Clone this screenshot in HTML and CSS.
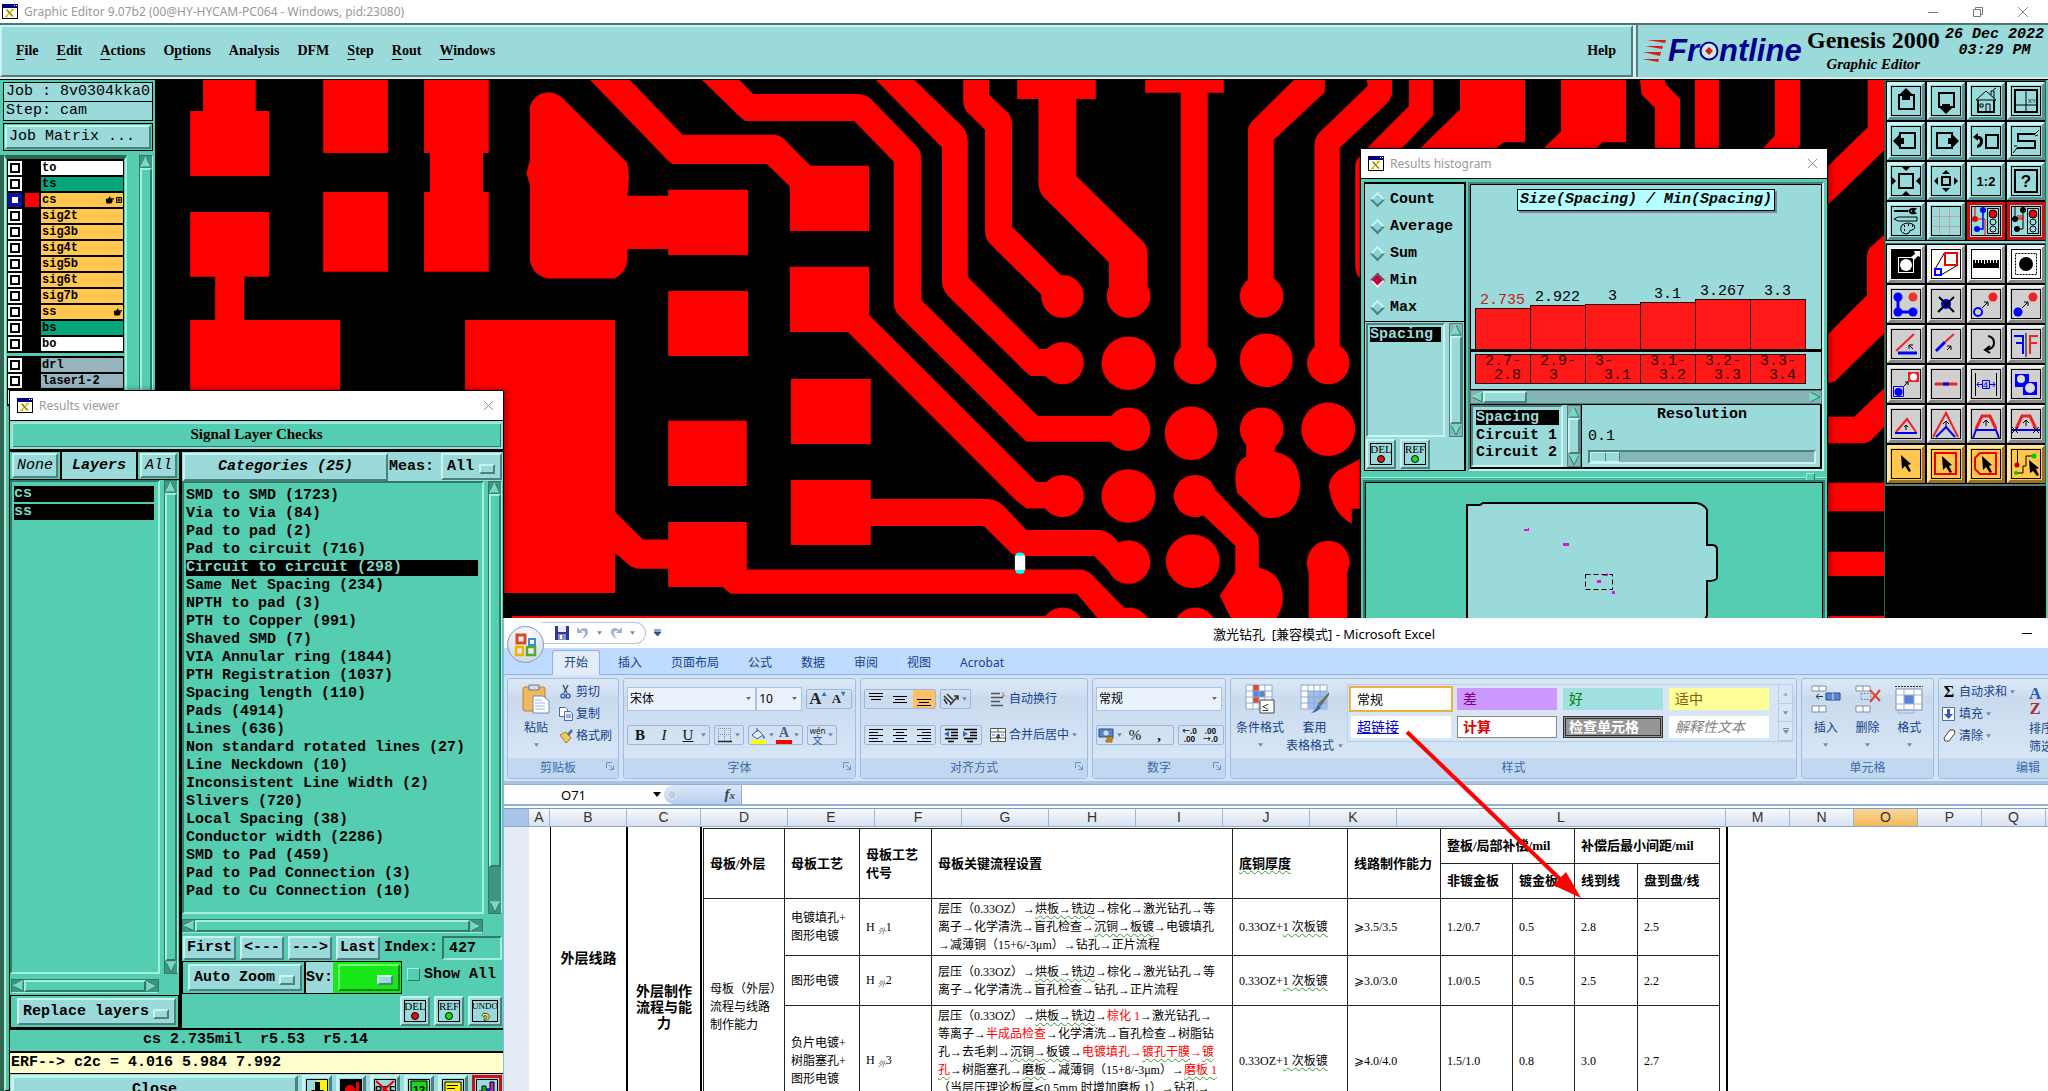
FILE: index.html
```html
<!DOCTYPE html>
<html lang="zh-CN">
<head>
<meta charset="utf-8">
<title>Graphic Editor 9.07b2</title>
<link rel="stylesheet" href="styles.css">
</head>
<body>
<svg class="defs" width="0" height="0" aria-hidden="true">
  <symbol id="xwin" viewBox="0 0 16 15"><rect x=".5" y=".5" width="15" height="14" fill="#fff" stroke="#000"/><rect width="16" height="4" fill="#000080"/><path d="M12 1.500h1M14 1.500h1" stroke="#fff"/><path d="M4.500 5.500l6 7M11 5.500l-7 7M9 5.500h3M3 12.500h3" stroke="#d8c400" stroke-width="1.600"/><path d="M5 6l6 6.500" stroke="#000" stroke-width=".6"/></symbol>
  <symbol id="close" viewBox="0 0 12 12"><path d="M1 1l10 10M11 1L1 11" stroke="#888" fill="none"/></symbol>
  <symbol id="drop" viewBox="0 0 6 4"><path d="M0 0h6L3 4z" fill="#6c8cb8"/></symbol>
  <symbol id="launch" viewBox="0 0 8 8"><path d="M.5 6V.5H6M3 3l4 4M7.500 3.500v4h-4" stroke="#6c93c8" fill="none"/></symbol>
  <symbol id="up" viewBox="0 0 12 12"><path d="M6 1L1 11h10z" fill="#74dcc4" stroke="#2f7a68"/><path d="M6 1L1 11" stroke="#bff5ea"/></symbol>
  <symbol id="down" viewBox="0 0 12 12"><path d="M6 11L1 1h10z" fill="#74dcc4" stroke="#2f7a68"/><path d="M1 1h10" stroke="#bff5ea"/></symbol>
  <symbol id="left" viewBox="0 0 12 12"><path d="M1 6L11 1v10z" fill="#74dcc4" stroke="#2f7a68"/><path d="M1 6l10-5" stroke="#bff5ea"/></symbol>
  <symbol id="right" viewBox="0 0 12 12"><path d="M11 6L1 1v10z" fill="#74dcc4" stroke="#2f7a68"/><path d="M1 11V1" stroke="#bff5ea"/></symbol>
  <symbol id="hand" viewBox="0 0 10 8"><path d="M1 3l3-1 1-2 1 0v2h4v1.500H8v1h1v1H8V7H7v1H2L1 6z" fill="#000"/></symbol>
  <symbol id="frame" viewBox="0 0 30 30"><rect x=".5" y=".5" width="29" height="29" fill="none" stroke="#000"/></symbol>
</svg>
<div class="desktop">

<main class="editor">
  <header class="titlebar">
    <svg class="wicon" width="16" height="15"><use href="#xwin"/></svg>
    <span>Graphic Editor 9.07b2 (00@HY-HYCAM-PC064 - Windows, pid:23080)</span>
    <div class="winctl">
      <svg width="12" height="12" viewBox="0 0 12 12"><path d="M1 6.500h10" stroke="#777"/></svg>
      <svg width="12" height="12" viewBox="0 0 12 12"><path d="M1.500 3.500h7v7h-7zM3.500 3.500v-2h7v7h-2" stroke="#777" fill="none"/></svg>
      <svg width="12" height="12"><use href="#close"/></svg>
    </div>
  </header>

  <div class="menubar">
    <nav class="menu">
      <a href="#"><u>F</u>ile</a><a href="#"><u>E</u>dit</a><a href="#"><u>A</u>ctions</a><a href="#">O<u>p</u>tions</a><a href="#">Analysis</a><a href="#">DFM</a><a href="#"><u>S</u>tep</a><a href="#"><u>R</u>out</a><a href="#"><u>W</u>indows</a>
      <a class="help" href="#">Help</a>
    </nav>
    <div class="brand">
      <div class="logo">
        <svg width="26" height="26" viewBox="0 0 26 26"><path d="M5 2h19l-1 3zM3 8h18l-1 3zM1 14h18l-1 4zM0 21h17l-1 3z" fill="#e01818"/></svg><span>Fr</span><svg width="20" height="22" viewBox="0 0 20 22"><circle cx="10" cy="11" r="8.500" fill="#c8ecec" stroke="#00008b" stroke-width="2"/><path d="M10 7l4 4-4 4-4-4z" fill="#e01818"/></svg><span>ntline</span>
      </div>
      <div class="product"><b>Genesis 2000</b><i>Graphic Editor</i></div>
      <div class="date"><time>26 Dec 2022</time><time>03:29 PM</time></div>
    </div>
  </div>

  <div class="work">
    <aside class="layers">
      <div class="jobbox">Job : 8v0304kka0</div>
      <div class="jobbox">Step: cam</div>
      <div class="matrix"><button>Job Matrix ...</button></div>
      <div class="layerarea">
        <div class="layerlists">
          <ul class="llist">
            <li><input type="checkbox" aria-label="to"><i></i><b>to</b></li>
            <li><input type="checkbox" aria-label="ts"><i></i><b class="mask">ts</b></li>
            <li><input type="checkbox" class="on" aria-label="cs"><i class="red"></i><b class="sig">cs<span><svg width="9" height="8"><use href="#hand"/></svg><svg width="6" height="6" viewBox="0 0 6 6"><path d="M.5.5h5v5h-5zM3 0v6M0 3h6" fill="none" stroke="#000"/></svg></span></b></li>
            <li><input type="checkbox" aria-label="sig2t"><i></i><b class="sig">sig2t</b></li>
            <li><input type="checkbox" aria-label="sig3b"><i></i><b class="sig">sig3b</b></li>
            <li><input type="checkbox" aria-label="sig4t"><i></i><b class="sig">sig4t</b></li>
            <li><input type="checkbox" aria-label="sig5b"><i></i><b class="sig">sig5b</b></li>
            <li><input type="checkbox" aria-label="sig6t"><i></i><b class="sig">sig6t</b></li>
            <li><input type="checkbox" aria-label="sig7b"><i></i><b class="sig">sig7b</b></li>
            <li><input type="checkbox" aria-label="ss"><i></i><b class="sig">ss<span><svg width="9" height="8"><use href="#hand"/></svg></span></b></li>
            <li><input type="checkbox" aria-label="bs"><i></i><b class="mask">bs</b></li>
            <li><input type="checkbox" aria-label="bo"><i></i><b>bo</b></li>
          </ul>
          <ul class="llist">
            <li><input type="checkbox" aria-label="drl"><i></i><b class="drill">drl</b></li>
            <li><input type="checkbox" aria-label="laser1-2"><i></i><b class="drill">laser1-2</b></li>
            <li><input type="checkbox" aria-label="drill"><i></i><b class="drill"></b></li>
          </ul>
        </div>
        <div class="vscroll"><svg width="12" height="12"><use href="#up"/></svg><div class="thumb"></div></div>
      </div>
    </aside>

    <div class="board">
    <svg viewBox="155 80 1729 1011" preserveAspectRatio="xMinYMin slice" fill="#f00">
      <rect x="155" y="80" width="1729" height="1011" fill="#000"/>
      <g transform="scale(.4464 .3333)">
        <path d="M455 240h118v93h30v195H426V333h29zM724 240h145v219H724zM950 240h145v219h-13v117h13v239H950V576h13V459H950zM724 576h145v239H724zM426 636h177v194h-56v130h215v400H426V960h56V830h-56zM1042 960h336v819h-336z"/>
      </g>
      <g transform="translate(500 60) scale(.574 .3571)">
        <path d="M52 130Q60 92 85 90 98 92 108 105L220 285Q228 310 222 380H293V363H432V546H293V529H222V560Q220 595 200 612H82Q56 600 52 560V350L46 318 52 280z"/>
        <path d="M157 56H226L318 209H480Q492 213 500 230L541 296H643V479H505V354L465 291H300L290 277z"/>
        <path d="M352 56H417L441 95H625Q640 98 648 112L725 240Q734 255 734 275V672L937 997H1075V1069H918L910 1058 695 715Q686 700 686 680V285L617 171H427L415 155z"/>
        <path d="M655 56H722L805 185Q815 205 815 225V608L940 809H965V885H925L915 872 780 660Q770 640 770 620V245z"/>
        <path d="M807 56H852V97L885 148Q892 160 892 180V467L985 615 943 657 852 512Q845 495 845 480V195L812 143Q807 130 807 115z"/>
        <path d="M901 56H1038V109H1004V325L1120 508Q1128 520 1128 540V660H1061V567L945 380Q938 360 938 345V109H901zM1124 56H1261V92H1233V830H1186V92H1124z"/>
        <path d="M1383 56H1437V90L1425 108 1348 224V640H1303V200Q1303 185 1310 172zM1510 56H1554V95Q1552 110 1545 122L1463 246V830H1419V235Q1420 215 1428 202L1512 72z"/>
        <path d="M1498 270Q1490 280 1490 300V580Q1492 605 1498 610z"/>
        <path d="M505 579H643V714L935 1182H965V1256H918L900 1235 606 762H505zM293 647H432V829H293zM507 893H646V1075H507zM293 1010H430V1193H293zM507 1176H646V1229H850Q868 1232 877 1248L917 1316H1045Q1062 1320 1070 1338L1085 1365 1060 1430 1035 1389H900L890 1380 843 1305H646V1358H507z"/>
        <path d="M0 728H200V1265L249 1343H293V1294H430V1427H1015Q1028 1435 1035 1448L1087 1533 1110 1570H1045L1005 1495H402L388 1476H293V1425H240Q228 1420 222 1410L200 1380V1492H0zM21 1557H960V1563H21z"/>
        <path d="M1300 1075H1350V1097Q1393 1110 1394 1190 1392 1275 1345 1283 1332 1283 1326 1276L1284 1212Q1274 1130 1300 1110zM1498 1117L1460 1150Q1444 1170 1444 1195 1450 1270 1484 1298V1257H1498z"/>
        <path d="M1247 1205L1315 1320Q1322 1332 1322 1345V1422Q1362 1435 1364 1505 1364 1540 1350 1568H1275L1254 1500 1281 1435V1360L1222 1270zM1405 1406H1480L1476 1440V1570H1409V1440z"/>
        <ellipse cx="980" cy="662" rx="37" ry="60"/><ellipse cx="1095" cy="662" rx="38" ry="60"/><ellipse cx="1327" cy="662" rx="38" ry="60"/>
        <ellipse cx="980" cy="849" rx="37" ry="59"/><ellipse cx="1095" cy="849" rx="47" ry="75"/><ellipse cx="1211" cy="849" rx="37" ry="59"/><ellipse cx="1335" cy="841" rx="46" ry="75"/><ellipse cx="1443" cy="849" rx="37" ry="59"/>
        <ellipse cx="1095" cy="1034" rx="38" ry="61"/><ellipse cx="1204" cy="1045" rx="46" ry="75"/><ellipse cx="1327" cy="1034" rx="38" ry="61"/><ellipse cx="1443" cy="1034" rx="47" ry="75"/>
        <ellipse cx="980" cy="1221" rx="37" ry="59"/><ellipse cx="1095" cy="1221" rx="47" ry="75"/><ellipse cx="1211" cy="1221" rx="37" ry="59"/>
        <ellipse cx="1095" cy="1406" rx="38" ry="61"/><ellipse cx="1207" cy="1404" rx="47" ry="75"/><ellipse cx="1443" cy="1406" rx="37" ry="60"/>
        <ellipse cx="980" cy="1593" rx="37" ry="60"/><ellipse cx="1095" cy="1593" rx="38" ry="60"/><ellipse cx="1211" cy="1593" rx="37" ry="60"/>
        <g fill="#0ff"><ellipse cx="906" cy="1388" rx="8" ry="9"/><ellipse cx="906" cy="1430" rx="8" ry="9"/></g><path d="M897 1388h18v40h-18z" fill="#fff"/>
      </g>
      <g transform="translate(1370 70) scale(.3333 .3521)">
        <path d="M0 28H66V70L-12 146zM117 28H189V130L95 223H-10L117 102zM270 28H465V205H400L378 223H150L270 112zM573 28H768V205H697L678 223H520L573 175zM810 28H885L887 40 930 82V223H855V107L815 70zM975 28h72v195h-72zM1215 28H1290V215L1284 223H1178L1215 187z"/>
        <path d="M1493 28H1543V228L1372 385V275L1493 163zM1543 468L1500 505Q1491 515 1491 530V640L1372 752V888Q1390 890 1400 880L1543 747zM1543 903L1453 985H1372V1060H1485Q1495 1060 1505 1050L1543 1013zM1372 1172h171v81H1372zM1372 1368h171v69H1372zM1372 1551h171v30H1372z"/>
      </g>
    </svg>
    </div>

    <aside class="tools">
      <div class="toolgrid">
        <button aria-label="pan up"><svg viewBox="0 0 30 30"><use href="#frame"/><rect x="8" y="9" width="15" height="14" fill="none" stroke="#000" stroke-width="2"/><path d="M15 2l6 6h-2v6h-8V8H9z"/></svg></button>
        <button aria-label="pan down"><svg viewBox="0 0 30 30"><use href="#frame"/><rect x="8" y="7" width="15" height="14" fill="none" stroke="#000" stroke-width="2"/><path d="M15 28l6-6h-2v-4h-8v4H9z"/></svg></button>
        <button aria-label="home"><svg viewBox="0 0 30 30"><use href="#frame"/><path d="M7 14v12h16V14" fill="none" stroke="#000" stroke-width="2"/><path d="M5 14L15 5l10 9zM20 9V5h3v7M15 26v-8h4v8M9 18h3v3H9zM22 4l3-2" fill="none" stroke="#000"/></svg></button>
        <button aria-label="coordinates"><svg viewBox="0 0 30 30"><use href="#frame"/><path d="M4 4h22v22H4z" fill="none" stroke="#000" stroke-width="2"/><path d="M15 4v22M4 19h22" stroke="#000"/><text x="17" y="17" font-size="6">XY</text></svg></button>
        <button aria-label="pan left"><svg viewBox="0 0 30 30"><use href="#frame"/><rect x="9" y="7" width="15" height="15" fill="none" stroke="#000" stroke-width="2"/><path d="M2 15l6-6v3h5v6H8v3z"/></svg></button>
        <button aria-label="pan right"><svg viewBox="0 0 30 30"><use href="#frame"/><rect x="6" y="7" width="15" height="15" fill="none" stroke="#000" stroke-width="2"/><path d="M28 15l-6-6v3h-5v6h5v3z"/></svg></button>
        <button aria-label="previous view"><svg viewBox="0 0 30 30"><use href="#frame"/><rect x="15" y="9" width="12" height="13" fill="none" stroke="#000" stroke-width="2"/><path d="M2 11l5-4v3q5 0 5 5 0 6-6 7v-3q3-1 3-4 0-2-2-2v2z"/></svg></button>
        <button aria-label="snake"><svg viewBox="0 0 30 30"><use href="#frame"/><path d="M24 8H7v7h17v7H6" fill="none" stroke="#000" stroke-width="2"/><path d="M24 8l4-4M24 10l3-1M6 22l-4 5M6 20l-3 0" stroke="#000"/></svg></button>
        <button aria-label="zoom in"><svg viewBox="0 0 30 30"><use href="#frame"/><rect x="8" y="8" width="14" height="14" fill="none" stroke="#000" stroke-width="2"/><path d="M15 5l-4-4h8zM15 25l-4 4h8zM5 15l-4-4v8zM25 15l4-4v8z"/></svg></button>
        <button aria-label="zoom out"><svg viewBox="0 0 30 30"><use href="#frame"/><rect x="11" y="11" width="8" height="8" fill="none" stroke="#000" stroke-width="2"/><path d="M15 4l-4 4h8zM15 26l-4-4h8zM3 15l4-4v8zM27 15l-4-4v8z"/></svg></button>
        <button aria-label="scale"><svg viewBox="0 0 30 30"><use href="#frame"/><text x="15" y="20" font-size="13" font-weight="bold" text-anchor="middle">1:2</text></svg></button>
        <button aria-label="help"><svg viewBox="0 0 30 30"><use href="#frame"/><path d="M4 4h22v22H4z" fill="none" stroke="#000" stroke-width="2"/><text x="15" y="21" font-size="17" font-weight="bold" text-anchor="middle">?</text></svg></button>
        <button aria-label="options"><svg viewBox="0 0 30 30"><use href="#frame"/><path d="M3 5h14M18 5q2-3 6-2l-2 2 2 2q-4 1-6-2" stroke="#000" stroke-width="2" fill="none"/><path d="M3 13l4-2h19v4H7zM12 27q-4-3-1-8 6-4 12 0 2 4-2 5-3 0-3 3-4 2-6 0z" fill="none" stroke="#000"/><path d="M13 20h1M17 19h1M21 20h1M13 24h1" stroke="#000" stroke-width="2"/></svg></button>
        <button aria-label="grid"><svg viewBox="0 0 30 30"><path d="M8.500 0v30M18.500 0v30M0 10.500h30M0 20.500h30" stroke="#c9a0a0"/><use href="#frame"/></svg></button>
        <button class="alert" aria-label="net on"><svg viewBox="0 0 30 30"><use href="#frame"/><path d="M4 1v12h10v16" fill="none" stroke="#e00"/><path d="M12 5v18H6" fill="none" stroke="#00f" stroke-width="1.500"/><circle cx="4" cy="13" r="3" fill="#e00"/><circle cx="12" cy="4" r="3" fill="#00f"/><circle cx="6" cy="23" r="3" fill="#00f"/><path d="M16.500 2.500h11v25h-11z" fill="none" stroke="#000"/><circle cx="22" cy="8" r="4" fill="#e00" stroke="#000"/><circle cx="22" cy="16" r="3" fill="none" stroke="#000"/><circle cx="22" cy="23" r="3" fill="none" stroke="#000"/></svg></button>
        <button class="alert" aria-label="net off"><svg viewBox="0 0 30 30"><use href="#frame"/><path d="M4 1v12M12 5v18H6" fill="none" stroke="#000"/><path d="M5 13h8M7 13v-4M9 13v-4M11 13v-4" stroke="#e00"/><circle cx="4" cy="13" r="3"/><circle cx="12" cy="4" r="3"/><circle cx="6" cy="23" r="3"/><path d="M16.500 2.500h11v25h-11z" fill="none" stroke="#000"/><circle cx="22" cy="8" r="4" fill="#e00" stroke="#000"/><circle cx="22" cy="16" r="3" fill="none" stroke="#000"/><circle cx="22" cy="23" r="3" fill="none" stroke="#000"/></svg></button>
      </div>
      <div class="toolgrid gray">
        <button class="white" aria-label="select pad"><svg viewBox="0 0 30 30"><path d="M0 0h30v30H0z"/><rect x="7.500" y="8.500" width="15" height="15" fill="none" stroke="#fff"/><circle cx="15" cy="16" r="6" fill="#fff"/><path d="M20 8l4-3-1-3h6v6l-2-1-4 4z" fill="#fff"/></svg></button>
        <button class="white" aria-label="project"><svg viewBox="0 0 30 30"><use href="#frame"/><path d="M4 20l10-17M10 26l17-10" stroke="#000"/><path d="M14 4h12v12H14z" fill="none" stroke="#e00" stroke-width="2"/><path d="M4 20h6v6H4z" fill="none" stroke="#00f" stroke-width="2"/></svg></button>
        <button class="white" aria-label="ruler"><svg viewBox="0 0 30 30"><use href="#frame"/><path d="M2 11h26v8H2z"/><path d="M4.500 11v3M7.500 11v3M10.500 11v3M13.500 11v4M16.500 11v3M19.500 11v3M22.500 11v3M25.500 11v3" stroke="#fff"/></svg></button>
        <button class="white" aria-label="select area"><svg viewBox="0 0 30 30"><use href="#frame"/><path d="M4.500 4.500h21v21h-21z" fill="none" stroke="#000" stroke-dasharray="2 1"/><circle cx="15" cy="15" r="7"/></svg></button>
        <button aria-label="chain"><svg viewBox="0 0 30 30"><use href="#frame"/><path d="M7 8v15h15" fill="none" stroke="#00f" stroke-width="3"/><g fill="#00f"><circle cx="7" cy="8" r="4.500"/><circle cx="7" cy="23" r="4.500"/><circle cx="22" cy="23" r="4.500"/></g><circle cx="22" cy="8" r="4.500" fill="#e33"/></svg></button>
        <button aria-label="delete"><svg viewBox="0 0 30 30"><use href="#frame"/><circle cx="15" cy="15" r="5" fill="#00f"/><path d="M8 8l15 15M23 8L7 23" stroke="#000" stroke-width="2"/></svg></button>
        <button aria-label="move"><svg viewBox="0 0 30 30"><use href="#frame"/><circle cx="7" cy="23" r="4" fill="none" stroke="#00f" stroke-width="2"/><circle cx="22" cy="8" r="4.500" fill="#e22"/><path d="M11 19l6-6M17 13h-4M17 13v4" stroke="#000"/></svg></button>
        <button aria-label="copy"><svg viewBox="0 0 30 30"><use href="#frame"/><circle cx="7" cy="23" r="4.500" fill="#00f"/><circle cx="22" cy="8" r="4.500" fill="#e22"/><path d="M11 19l6-6M17 13h-4M17 13v4" stroke="#000"/></svg></button>
        <button aria-label="angle"><svg viewBox="0 0 30 30"><use href="#frame"/><path d="M5 22L23 5" stroke="#e22" stroke-width="2"/><path d="M7 24h19" stroke="#00f" stroke-width="3"/><path d="M22 20l-4-4M18 20v-4h4" stroke="#000" fill="none"/></svg></button>
        <button aria-label="stretch"><svg viewBox="0 0 30 30"><use href="#frame"/><path d="M5 22l9-9" stroke="#00f" stroke-width="3"/><path d="M14 13l9-8" stroke="#e22" stroke-width="2"/><path d="M16 21l4-4M16 17h4v4" stroke="#000" fill="none"/></svg></button>
        <button aria-label="rotate"><svg viewBox="0 0 30 30"><use href="#frame"/><path d="M17 7q6 1 6 7 0 6-8 7M19 17l-5 4 5 3" fill="none" stroke="#000" stroke-width="2"/></svg></button>
        <button aria-label="mirror"><svg viewBox="0 0 30 30"><use href="#frame"/><path d="M15 4v24" stroke="#000"/><path d="M3 7h9v18M12 14H5" fill="none" stroke="#00f" stroke-width="2"/><path d="M27 7h-8v18M19 14h7" fill="none" stroke="#e22" stroke-width="2"/></svg></button>
        <button aria-label="transform"><svg viewBox="0 0 30 30"><use href="#frame"/><path d="M2.500 17.500h10v10h-10z" fill="none" stroke="#00f"/><circle cx="7.500" cy="23" r="4" fill="#00f"/><path d="M17 3h11v10H17z" fill="#e22"/><circle cx="22.500" cy="8" r="3.500" fill="#fff"/><path d="M13 17l4-4M17 16v-3h-3" fill="none" stroke="#000"/></svg></button>
        <button aria-label="join"><svg viewBox="0 0 30 30"><use href="#frame"/><path d="M5 15h20" stroke="#e22" stroke-width="3" stroke-linecap="round"/><path d="M12 15h6" stroke="#00f" stroke-width="3"/></svg></button>
        <button aria-label="spacing"><svg viewBox="0 0 30 30"><use href="#frame"/><path d="M4.500 4v23M25.500 4v23" stroke="#000"/><path d="M6 15.500h5M19 15.500h5M8 13l-2 2.500L8 18M22 13l2 2.500-2 2.500M11.500 11.500h7v8h-7z" fill="none" stroke="#00f"/><text x="12" y="19" font-size="9" fill="#00f">4</text></svg></button>
        <button aria-label="merge"><svg viewBox="0 0 30 30"><use href="#frame"/><path d="M4 5h14v8h8v13H12v-8H4z" fill="#00f"/><circle cx="10" cy="10" r="4" fill="#ddd"/><circle cx="19" cy="19" r="5" fill="#ddd"/></svg></button>
        <button aria-label="triangle"><svg viewBox="0 0 30 30"><use href="#frame"/><path d="M5 23l11-13 9 13" fill="none" stroke="#e22" stroke-width="2"/><path d="M4 24h22" stroke="#00f" stroke-width="2"/><path d="M15 21v-5M13 18l2-2 2 2" fill="none" stroke="#000"/></svg></button>
        <button aria-label="peak"><svg viewBox="0 0 30 30"><use href="#frame"/><path d="M2 28L15 4l12 24" fill="none" stroke="#e22" stroke-width="2"/><path d="M5 28l10-10 9 10" fill="none" stroke="#00f" stroke-width="2"/><path d="M15 18v-6M12 15l3-3 3 3" fill="none" stroke="#000"/></svg></button>
        <button aria-label="trapezoid"><svg viewBox="0 0 30 30"><use href="#frame"/><path d="M5 20L11 7h8l6 13" fill="none" stroke="#e22" stroke-width="3"/><path d="M2 29l3-8h20l3 8" fill="none" stroke="#00f" stroke-width="2"/><path d="M15 17v-6M12 14l3-3 3 3" fill="none" stroke="#000"/></svg></button>
        <button aria-label="trapezoid cut"><svg viewBox="0 0 30 30"><use href="#frame"/><path d="M5 20L11 7h8l6 13" fill="none" stroke="#e22" stroke-width="3"/><path d="M1 21h28" stroke="#00f" stroke-width="2"/><path d="M15 17v-6M12 14l3-3 3 3M1 24l6-6M1 18l6 6M22 24l6-6M22 18l6 6" fill="none" stroke="#000"/></svg></button>
        <button class="gold" aria-label="pointer"><svg viewBox="0 0 30 30"><use href="#frame"/><path d="M10 6l10 9-3 1 3 6-2 1-4-6-3 3z"/></svg></button>
        <button class="gold" aria-label="frame select"><svg viewBox="0 0 30 30"><use href="#frame"/><path d="M4 4h21v21H4z" fill="none" stroke="#e00" stroke-width="2"/><path d="M11 7l10 9-3 1 3 6-2 1-4-6-3 3z"/></svg></button>
        <button class="gold" aria-label="polygon select"><svg viewBox="0 0 30 30"><use href="#frame"/><path d="M9 4h16v21H9l-5-5V9z" fill="none" stroke="#e00" stroke-width="2"/><path d="M11 7l10 9-3 1 3 6-2 1-4-6-3 3z"/></svg></button>
        <button class="gold" aria-label="net select"><svg viewBox="0 0 30 30"><use href="#frame"/><path d="M6.500 1v14M6 24h6v-7h3V7h6" fill="none" stroke="#000"/><circle cx="6" cy="16" r="2.500" fill="#a00"/><circle cx="5" cy="24" r="2" fill="#0c0"/><circle cx="23" cy="7" r="2.500" fill="#0c0"/><path d="M18 11l10 8-3 1 3 6-2 1-4-5-3 2z"/></svg></button>
      </div>
    </aside>
  </div>
</main>

<section class="window hist">
  <header class="wtitle"><svg width="16" height="15"><use href="#xwin"/></svg><span>Results histogram</span><button aria-label="Close"><svg width="11" height="11"><use href="#close"/></svg></button></header>
  <div class="histtop">
    <div class="hleft">
      <div class="radios">
        <label><input type="radio" name="m">Count</label>
        <label><input type="radio" name="m">Average</label>
        <label><input type="radio" name="m">Sum</label>
        <label><input type="radio" name="m" checked>Min</label>
        <label><input type="radio" name="m">Max</label>
      </div>
      <div class="hlist"><div class="well"><div class="sel">Spacing</div></div><div class="vscroll cy"><svg width="12" height="12"><use href="#up"/></svg><div class="thumb"></div><svg width="12" height="12"><use href="#down"/></svg></div></div>
      <div class="minis"><button class="mini"><span>DEL<i></i></span></button><button class="mini ref"><span>REF<i></i></span></button></div>
    </div>
    <div class="hright">
      <div class="chart">
        <h3>Size(Spacing) / Min(Spacing)</h3>
        <div class="bars">
          <div class="hot">2.735<i style="height:41px"></i></div><div>2.922<i style="height:44px"></i></div><div>3<i style="height:45px"></i></div><div>3.1<i style="height:47px"></i></div><div>3.267<i style="height:50px"></i></div><div>3.3<i style="height:50px"></i></div>
        </div>
        <div class="axis"></div>
        <div class="bins"><div>2.7-<br>&nbsp;2.8</div><div>2.9-<br>&nbsp;3</div><div>3-<br>&nbsp;3.1</div><div>3.1-<br>&nbsp;3.2</div><div>3.2-<br>&nbsp;3.3</div><div>3.3-<br>&nbsp;3.4</div></div>
      </div>
      <div class="hscroll cy"><svg width="12" height="12"><use href="#left"/></svg><div class="thumb short"></div><svg width="12" height="12"><use href="#right"/></svg></div>
      <div class="hbottom">
        <div class="well reslist"><div class="sel">Spacing</div><div>Circuit 1</div><div>Circuit 2</div></div>
        <div class="vscroll cy"><svg width="12" height="12"><use href="#up"/></svg><div class="thumb"></div><svg width="12" height="12"><use href="#down"/></svg></div>
        <div class="resbox"><label for="res">Resolution</label><output>0.1</output><input id="res" type="range" value="0"></div>
      </div>
    </div>
  </div>
  <div class="splitter"><i></i></div>
  <div class="map">
    <svg width="454" height="150" viewBox="1367 482 454 150"><path d="M1468 640V504H1481L1484 502H1698Q1706 504 1708 509V544H1714Q1718 545 1718 548V577Q1717 580 1708 580V614L1706 619V640z" fill="#9bdada" stroke="#000" stroke-width="2"/><path d="M1586.500 573.500h27v15h-27z" fill="none" stroke="#000" stroke-dasharray="5 3"/><path d="M1525 528h4v-1h1v3h-5zM1564 542h6v3h-6zM1598 579h4v3h-4zM1604 574h4v-2h1v3h-5zM1613 590h3v3h-3z" fill="#e010e0"/></svg>
  </div>
</section>

<section class="window viewer">
  <header class="wtitle"><svg width="16" height="15"><use href="#xwin"/></svg><span>Results viewer</span><button aria-label="Close"><svg width="11" height="11"><use href="#close"/></svg></button></header>
  <h2>Signal Layer Checks</h2>
  <div class="vcols">
    <div class="vl">
      <div class="vlhead"><button><i>None</i></button><b>Layers</b><button><i>All</i></button></div>
      <div class="vlbody">
        <ul class="well gr"><li class="sel">cs</li><li class="sel">ss</li></ul>
        <div class="vscroll"><svg width="12" height="12"><use href="#up"/></svg><div class="thumb"></div><svg width="12" height="12"><use href="#down"/></svg></div>
      </div>
      <div class="hscroll"><svg width="12" height="12"><use href="#left"/></svg><div class="thumb"></div><svg width="12" height="12"><use href="#right"/></svg></div>
      <div class="optbox"><div class="opt"><select aria-label="Layer mode"><option>Replace layers</option></select></div></div>
    </div>
    <div class="vr">
      <div class="vrhead"><button>Categories (25)</button><label for="meas">Meas:</label><div class="opt"><select id="meas"><option>All</option></select></div></div>
      <div class="vlbody">
        <ul class="well gr cats"><li>SMD to SMD (1723)</li><li>Via to Via (84)</li><li>Pad to pad (2)</li><li>Pad to circuit (716)</li><li class="sel">Circuit to circuit (298)</li><li>Same Net Spacing (234)</li><li>NPTH to pad (3)</li><li>PTH to Copper (991)</li><li>Shaved SMD (7)</li><li>VIA Annular ring (1844)</li><li>PTH Registration (1037)</li><li>Spacing length (110)</li><li>Pads (4914)</li><li>Lines (636)</li><li>Non standard rotated lines (27)</li><li>Line Neckdown (10)</li><li>Inconsistent Line Width (2)</li><li>Slivers (720)</li><li>Local Spacing (38)</li><li>Conductor width (2286)</li><li>SMD to Pad (459)</li><li>Pad to Pad Connection (3)</li><li>Pad to Cu Connection (10)</li></ul>
        <div class="vscroll"><svg width="12" height="12"><use href="#up"/></svg><div class="thumb"></div><div class="trough"></div><svg width="12" height="12"><use href="#down"/></svg></div>
      </div>
      <div class="hscroll"><svg width="12" height="12"><use href="#left"/></svg><div class="thumb"></div><svg width="12" height="12"><use href="#right"/></svg></div>
      <div class="navrow"><button>First</button><button>&lt;---</button><button>---&gt;</button><button>Last</button><label for="idx">Index:</label><input id="idx" value="427"></div>
      <div class="zoomrow"><div class="zbox"><div class="opt"><select aria-label="Zoom"><option>Auto Zoom</option></select></div></div><div class="svbox"><label for="sv">Sv:</label><div class="green"><div class="opt"><select id="sv"><option></option></select></div></div></div><label class="chk"><input type="checkbox">Show All</label></div>
      <div class="minis"><button class="mini"><span>DEL<i></i></span></button><button class="mini ref"><span>REF<i></i></span></button><button class="mini undo"><span>UNDO<svg width="12" height="12" viewBox="0 0 12 12"><path d="M4 1L1 4l3 3V5h3q2 1 0 4H4v2h4q4-2 3-6-1-3-4-3H4z" fill="#ffe840" stroke="#000" stroke-width=".8"/></svg></span></button></div>
    </div>
  </div>
  <pre class="status">cs 2.735mil  r5.53  r5.14</pre>
  <pre class="erf">ERF--&gt; c2c = 4.016 5.984 7.992</pre>
  <div class="vfoot"><button class="closebtn">Close</button>
    <button aria-label="exit"><svg viewBox="0 0 22 22"><path d="M0 0h11v22H0z" fill="#9bdada"/><path d="M11 0h11v22H11z" fill="#ffee10"/><path d="M9 3h5v8h4l-6 7-7-7h4z"/><path d="M.5.5h21v21H.5z" fill="none" stroke="#000"/></svg></button>
    <button aria-label="stop"><svg viewBox="0 0 22 22"><path d="M0 0h22v22H0z"/><path d="M16 3h3v12h-3z" fill="#e00"/><circle cx="10" cy="11" r="5" fill="#e00"/></svg></button>
    <button aria-label="no reference"><svg viewBox="0 0 22 22"><path d="M.5.5h21v21H.5z" fill="none" stroke="#000"/><text x="11" y="15" font-size="10" font-weight="bold" text-anchor="middle">REF</text><path d="M2 2l18 16M20 2L2 18" stroke="#e00" stroke-width="2"/></svg></button>
    <button aria-label="number"><svg viewBox="0 0 22 22"><path d="M.5.5h21v21H.5z" fill="none" stroke="#000"/><path d="M3 2h16v18H3z" fill="#18d818" stroke="#000"/><text x="11" y="15" font-size="11" font-weight="bold" text-anchor="middle">12</text></svg></button>
    <button aria-label="notes"><svg viewBox="0 0 22 22"><path d="M.5.5h21v21H.5z" fill="none" stroke="#000"/><path d="M3 3h16v17H3z" fill="#ffee10" stroke="#000"/><path d="M5 6.500h11M5 9.500h8M5 12.500h11M5 15.500h9" stroke="#000"/></svg></button>
    <button class="alert" aria-label="histogram"><svg viewBox="0 0 22 22"><path d="M.5.500h21v21H.5z" fill="none" stroke="#000"/><path d="M3 12h3v10H3z" fill="#e00"/><path d="M6 7h4v15H6z" fill="#2a2"/><path d="M10 10h4v12h-4z" fill="#22c"/><path d="M14 3h4v19h-4z" fill="#a3a"/><path d="M3 12h3V7h4v3h4V3h4v19" fill="none" stroke="#000"/></svg></button>
  </div>
</section>

<section class="excel">
  <header class="xtitle">
    <div class="orb"><svg width="26" height="26" viewBox="0 0 26 26"><path d="M4 3h8v8H4z" fill="none" stroke="#e0481c" stroke-width="3"/><path d="M16 7h6v6h-6z" fill="none" stroke="#3a8bd8" stroke-width="2"/><path d="M3 15h7v8H3z" fill="none" stroke="#f0b400" stroke-width="2.500"/><path d="M14 15h8v8h-8z" fill="none" stroke="#58a830" stroke-width="2.500"/></svg></div>
    <div class="qat">
      <svg width="14" height="14" viewBox="0 0 14 14"><path d="M0 0h14v14H0z" fill="#3038a0"/><path d="M3 0h8v6H3z" fill="#e8ecff"/><path d="M3 8h8v6H3z" fill="#8890c8"/><path d="M5 9h2v4H5z" fill="#fff"/></svg>
      <svg width="14" height="14" viewBox="0 0 14 14"><path d="M1 1v6h6L5 5q4-1 4 2 0 2-3 6 6-3 6-7 0-4-4-4-2 0-4 2z" fill="#a4b2d0"/></svg><svg width="5" height="4"><use href="#drop"/></svg>
      <svg width="14" height="14" viewBox="0 0 14 14"><path d="M13 1v6H7l2-2Q5 4 5 7q0 2 3 6-6-3-6-7 0-4 4-4 2 0 4 2z" fill="#a4b2d0"/></svg><svg width="5" height="4"><use href="#drop"/></svg>
    </div>
    <svg class="more" width="7" height="8" viewBox="0 0 7 8"><path d="M0 1h7M0 3h7L3.500 7z" stroke="#334f80" fill="#334f80"/></svg>
    <h1>激光钻孔&nbsp; [兼容模式] - Microsoft Excel</h1>
    <svg class="min" width="12" height="3" viewBox="0 0 12 3"><path d="M0 1.500h10" stroke="#000"/></svg>
  </header>
  <nav class="tabs"><a class="act" href="#">开始</a><a href="#">插入</a><a href="#">页面布局</a><a href="#">公式</a><a href="#">数据</a><a href="#">审阅</a><a href="#">视图</a><a href="#">Acrobat</a></nav>
  <div class="ribbon">
    <div class="grp g1"><div class="gb">
      <button class="big"><svg width="28" height="30" viewBox="0 0 28 30"><rect x="1" y="3" width="22" height="24" rx="2" fill="#f2b95c" stroke="#b98235"/><path d="M7 1h10v5H7z" fill="#d6dce6" stroke="#6b7688"/><path d="M11 12h10l6 5v12H11z" fill="#fff" stroke="#6f8db8"/><path d="M13 16h7M13 19h10M13 22h10M13 25h10" stroke="#9fb8dc"/></svg>粘贴<svg width="5" height="4"><use href="#drop"/></svg></button>
      <div class="stack"><button><svg width="14" height="14" viewBox="0 0 14 14"><path d="M4 0l4 8M9 0L5 8" stroke="#46586f" stroke-width="1.500"/><circle cx="4" cy="11" r="2" fill="none" stroke="#3c63a8" stroke-width="1.500"/><circle cx="9" cy="11" r="2" fill="none" stroke="#3c63a8" stroke-width="1.500"/></svg>剪切</button><button><svg width="14" height="14" viewBox="0 0 14 14"><path d="M.5.5h6l2 2v7h-8z" fill="#fff" stroke="#4a6ea8"/><path d="M5.500 4.500h6l2 2v7h-8z" fill="#e8f0ff" stroke="#4a6ea8"/><path d="M7 8h5M7 10h5" stroke="#4a6ea8"/></svg>复制</button><button><svg width="14" height="14" viewBox="0 0 14 14"><path d="M1 6l6-3 5 6-5 5z" fill="#f4c860" stroke="#a87a28"/><path d="M8 5l4-5 2 2-4 5z" fill="#5c6f90"/></svg>格式刷</button></div>
    </div><div class="gl">剪贴板<svg width="8" height="8"><use href="#launch"/></svg></div></div>

    <div class="grp g2"><div class="gb rows">
      <div><select class="font" aria-label="字体"><option>宋体</option></select><select class="size" aria-label="字号"><option>10</option></select><span class="bg push"><button class="aa">A<sup>▴</sup></button><button class="aa s">A<sup>▾</sup></button></span></div>
      <div><span class="bg"><button class="l"><b>B</b></button><button class="l"><i>I</i></button><button class="l"><u>U</u></button><svg width="5" height="4"><use href="#drop"/></svg></span><span class="bg"><button aria-label="边框"><svg width="16" height="16" viewBox="0 0 16 16"><path d="M1.500 1v14M7.500 1v14M13.500 1v14M1 1.500h14M1 7.500h14" stroke="#7d8fae" stroke-dasharray="1 1"/><path d="M1 14.500h14" stroke="#223" stroke-width="1.500"/></svg></button><svg width="5" height="4"><use href="#drop"/></svg></span><span class="bg"><button aria-label="填充颜色"><svg width="17" height="17" viewBox="0 0 17 17"><path d="M2 8l6-5 5 5-6 4z" fill="#e8eef8" stroke="#44608c"/><path d="M13 8q3 2 1 4-2-1-1-4z" fill="#3c78c8"/><path d="M7 1v4" stroke="#44608c"/><path d="M1 13h15v4H1z" fill="#ff0"/></svg></button><svg width="5" height="4"><use href="#drop"/></svg><button class="ac">A</button><svg width="5" height="4"><use href="#drop"/></svg></span><span class="bg"><button class="wen"><small>wén</small><span>文</span></button><svg width="5" height="4"><use href="#drop"/></svg></span></div>
    </div><div class="gl">字体<svg width="8" height="8"><use href="#launch"/></svg></div></div>

    <div class="grp g3"><div class="gb rows">
      <div><span class="bg al"><button aria-label="顶端"><svg width="16" height="16" viewBox="0 0 16 16"><path d="M1 2.500h14M1 5.500h14M3 8.500h10" stroke="#000"/></svg></button><button aria-label="居中"><svg width="16" height="16" viewBox="0 0 16 16"><path d="M1 5.500h14M3 8.500h10M1 11.500h14" stroke="#000"/></svg></button><button class="hot" aria-label="底端"><svg width="16" height="16" viewBox="0 0 16 16"><path d="M1 8.500h14M3 11.500h10M1 14.500h14" stroke="#000"/></svg></button></span><span class="bg"><button aria-label="方向"><svg width="18" height="16" viewBox="0 0 18 16"><path d="M2 5l7 7M5 3l6 6M2 8l3 5M8 14L16 5M16 9V5h-4" fill="none" stroke="#333" stroke-width="1.500"/></svg></button><svg width="5" height="4"><use href="#drop"/></svg></span><button class="txt"><svg width="16" height="16" viewBox="0 0 16 16"><path d="M1 2.500h9M1 6.500h12M1 10.500h9M1 14.500h12" stroke="#555" stroke-width="1.500"/><path d="M13 1v5l2-2" stroke="#b08030" fill="none"/></svg>自动换行</button></div>
      <div><span class="bg al"><button aria-label="左"><svg width="16" height="16" viewBox="0 0 16 16"><path d="M1 2.500h14M1 5.500h9M1 8.500h14M1 11.500h9M1 14.500h14" stroke="#000"/></svg></button><button aria-label="中"><svg width="16" height="16" viewBox="0 0 16 16"><path d="M1 2.500h14M4 5.500h8M1 8.500h14M4 11.500h8M1 14.500h14" stroke="#000"/></svg></button><button aria-label="右"><svg width="16" height="16" viewBox="0 0 16 16"><path d="M1 2.500h14M6 5.500h9M1 8.500h14M6 11.500h9M1 14.500h14" stroke="#000"/></svg></button></span><span class="bg"><button aria-label="减少缩进"><svg width="16" height="16" viewBox="0 0 16 16"><path d="M2 2.500h13M8 5.500h7M8 8.500h7M2 11.500h13M5 14.500h6" stroke="#000" stroke-width="1.500"/><path d="M6 4v6L1 7z" fill="#3c63c8"/></svg></button><button aria-label="增加缩进"><svg width="16" height="16" viewBox="0 0 16 16"><path d="M2 2.500h13M8 5.500h7M8 8.500h7M2 11.500h13M5 14.500h6" stroke="#000" stroke-width="1.500"/><path d="M1 4v6l5-3z" fill="#3c63c8"/></svg></button></span><button class="txt"><svg width="16" height="16" viewBox="0 0 16 16"><path d="M.5 1.500h15v13H.5zM.5 5h15M.5 11h15M8 2v3M8 11v3" fill="#fff" stroke="#555"/><path d="M2 8h3M14 8h-3" stroke="#27c"/><text x="6" y="10.500" font-size="8" font-weight="bold">a</text></svg>合并后居中<svg width="5" height="4"><use href="#drop"/></svg></button></div>
    </div><div class="gl">对齐方式<svg width="8" height="8"><use href="#launch"/></svg></div></div>

    <div class="grp g4"><div class="gb rows">
      <div><select class="numf" aria-label="数字格式"><option>常规</option></select></div>
      <div><span class="bg"><button aria-label="货币"><svg width="17" height="17" viewBox="0 0 17 17"><path d="M1 2h14v8H1z" fill="#5d86c4" stroke="#2c4a80"/><circle cx="8" cy="6" r="2.500" fill="#cde"/><path d="M9 10h6v2H9zM8 13h6v2H8z" fill="#e8a820" stroke="#94660c"/></svg></button><svg width="5" height="4"><use href="#drop"/></svg><button class="l">%</button><button class="l"><b>,</b></button></span><span class="bg push"><button class="dec">←.0<br>.00</button><button class="dec">.00<br>→.0</button></span></div>
    </div><div class="gl">数字<svg width="8" height="8"><use href="#launch"/></svg></div></div>

    <div class="grp g5"><div class="gb">
      <button class="big w"><svg width="30" height="30" viewBox="0 0 30 30"><path d="M1 1h26v24H1z" fill="#fff" stroke="#8fa6cc"/><path d="M8 1h6v6H8zM8 13h6v6H8z" fill="#e0482c"/><path d="M8 7h12v6H8z" fill="#5b84d0"/><path d="M1 7h26M1 13h26M1 19h26M8 1v24M14 1v24M20 1v24" stroke="#8fa6cc"/><path d="M15 16h14v13H15z" fill="#fff" stroke="#444"/><text x="17" y="27" font-size="12" font-weight="bold">≤</text></svg>条件格式<svg width="5" height="4"><use href="#drop"/></svg></button>
      <button class="big w"><svg width="30" height="30" viewBox="0 0 30 30"><path d="M1 1h26v24H1z" fill="#fff" stroke="#8fa6cc"/><path d="M8 7h19v18H8z" fill="#9cc0ec"/><path d="M1 7h26M1 13h26M1 19h26M8 1v24M14 1v24M20 1v24" stroke="#8fa6cc"/><path d="M29 8L18 20l3 2 8-11z" fill="#7a6a58"/><path d="M18 20l3 3q-3 5-10 6 5-3 7-9z" fill="#3c63b0"/></svg>套用<span>表格格式 <svg width="5" height="4"><use href="#drop"/></svg></span></button>
      <div class="gallery"><div class="cells"><span class="norm">常规</span><span class="bad">差</span><span class="good">好</span><span class="neu">适中</span><span class="lnk">超链接</span><span class="calc">计算</span><span class="chkc">检查单元格</span><span class="expl">解释性文本</span></div><div class="gs"><button aria-label="上"><svg width="5" height="4" viewBox="0 0 6 4"><path d="M0 4h6L3 0z" fill="#aab"/></svg></button><button aria-label="下"><svg width="5" height="4"><use href="#drop"/></svg></button><button aria-label="更多"><svg width="6" height="6" viewBox="0 0 6 6"><path d="M0 .5h6" stroke="#6c8cb8"/><path d="M0 2h6L3 6z" fill="#6c8cb8"/></svg></button></div></div>
    </div><div class="gl">样式</div></div>

    <div class="grp g6"><div class="gb">
      <button class="big n"><svg width="30" height="30" viewBox="0 0 30 30"><path d="M1 2h14v5H1zM1 22h14v6H1zM8 2v5M8 22v6" fill="#fff" stroke="#7d8fae"/><path d="M15 9h14v7H15z" fill="#5b84d0" stroke="#2c4a80"/><path d="M22 9v7" stroke="#cde"/><path d="M12 12.500H6M8 10l-3 2.500L8 15" stroke="#334" fill="none"/></svg>插入<svg width="5" height="4"><use href="#drop"/></svg></button>
      <button class="big n"><svg width="30" height="30" viewBox="0 0 30 30"><path d="M3 2h14v5H3zM3 22h14v6H3zM10 2v5M10 22v6" fill="#fff" stroke="#7d8fae"/><path d="M8 9.500h10v6H8z" fill="none" stroke="#7d8fae" stroke-dasharray="2 1"/><path d="M17 6l10 11M27 6L17 18" stroke="#e0442c" stroke-width="2"/></svg>删除<svg width="5" height="4"><use href="#drop"/></svg></button>
      <button class="big n"><svg width="30" height="30" viewBox="0 0 30 30"><path d="M1 2.500h28" stroke="#334" stroke-dasharray="2 1"/><path d="M2 5h26v21H2z" fill="#fff" stroke="#7d8fae"/><path d="M10 11h10v9H10z" fill="#5b84d0"/><path d="M2 11h26M2 20h26M10 5v21M20 5v21M4 26h16v3H4z" stroke="#9fb2d2" fill="none"/></svg>格式<svg width="5" height="4"><use href="#drop"/></svg></button>
    </div><div class="gl">单元格</div></div>

    <div class="grp g7"><div class="gb">
      <div class="stack"><button><b class="sigma">Σ</b>自动求和<svg width="5" height="4"><use href="#drop"/></svg></button><button><svg width="14" height="14" viewBox="0 0 14 14"><path d="M.5.5h12v13H.5z" fill="#fff" stroke="#4a6ea8"/><path d="M5 2h3v5h3l-4.500 5L2 7h3z" fill="#2c5cc0"/></svg>填充<svg width="5" height="4"><use href="#drop"/></svg></button><button><svg width="14" height="14" viewBox="0 0 14 14"><path d="M2 9L8 1h4l1 3-6 8H3z" fill="#fff" stroke="#444"/></svg>清除<svg width="5" height="4"><use href="#drop"/></svg></button></div>
      <button class="big n sort"><span class="az"><b>A</b><b>Z</b></span>排序和<span>筛选</span></button>
    </div><div class="gl">编辑</div></div>
  </div>

  <div class="fbar"><input class="name" value="O71" aria-label="名称框"><svg class="nd" width="8" height="5" viewBox="0 0 8 5"><path d="M0 0h8L4 5z"/></svg><div class="fxbox"><i class="knob"></i><i>f<small>x</small></i></div><input class="formula" aria-label="编辑栏"></div>

  <div class="cols"><span class="corner"></span><span>A</span><span>B</span><span>C</span><span>D</span><span>E</span><span>F</span><span>G</span><span>H</span><span>I</span><span>J</span><span>K</span><span>L</span><span>M</span><span>N</span><span class="cur">O</span><span>P</span><span>Q</span></div>
  <div class="sheet">
    <div class="rowhead"></div><div class="ca"></div>
    <div class="cb">外层线路</div><div class="cc">外层制作流程与能力</div>
    <div class="inner">
    <table>
      <colgroup><col class="w81"><col class="w75"><col class="w72"><col class="w301"><col class="w115"><col class="w93"><col class="w72"><col class="w62"><col class="w63"><col class="w82"></colgroup>
      <thead>
      <tr><th rowspan="2">母板/外层</th><th rowspan="2">母板工艺</th><th rowspan="2">母板工艺<br>代号</th><th rowspan="2">母板关键流程设置</th><th rowspan="2"><u>底铜厚度</u></th><th rowspan="2">线路制作能力</th><th colspan="2">整板/局部补偿/mil</th><th colspan="2">补偿后最小间距/mil</th></tr>
      <tr><th>非镀金板</th><th>镀金板</th><th>线到线</th><th>盘到盘/线</th></tr>
      </thead>
      <tbody>
      <tr class="r1"><td rowspan="3" class="mid">母板（外层）<br>流程与线路<br>制作能力</td><td>电镀填孔+<br>图形电镀</td><td>H <sub>外</sub>1</td><td>层压（0.33OZ）→<u>烘板→铣边</u>→棕化→激光钻孔→等<br>离子→化学清洗→盲孔检查→<u>沉铜→板镀</u>→电镀填孔<br>→减薄铜（15+6/-3μm）→钻孔→正片流程</td><td>0.33OZ+<u>1 次板镀</u></td><td>⩾3.5/3.5</td><td>1.2/0.7</td><td>0.5</td><td>2.8</td><td>2.5</td></tr>
      <tr class="r2"><td>图形电镀</td><td>H <sub>外</sub>2</td><td>层压（0.33OZ）→<u>烘板→铣边</u>→棕化→激光钻孔→等<br>离子→化学清洗→盲孔检查→钻孔→正片流程</td><td>0.33OZ+<u>1 次板镀</u></td><td>⩾3.0/3.0</td><td>1.0/0.5</td><td>0.5</td><td>2.5</td><td>2.2</td></tr>
      <tr class="r3"><td>负片电镀+<br>树脂塞孔+<br>图形电镀</td><td>H <sub>外</sub>3</td><td class="long">层压（0.33OZ）→<u>烘板→铣边</u>→<em>棕化 1</em>→激光钻孔→<br>等离子→<em>半成品检查</em>→化学清洗→盲孔检查→树脂钻<br>孔→去毛刺→<u>沉铜→板镀</u>→<em>电镀填孔→<u>镀孔干膜</u>→<u>镀</u></em><br><em><u>孔</u></em>→树脂塞孔→<u>磨板</u>→减薄铜（15+8/-3μm）→<em><u>磨板 1</u></em><br>（当层压理论板厚⩽0.5mm 时增加磨板 1）→钻孔→</td><td>0.33OZ+<u>1 次板镀</u></td><td>⩾4.0/4.0</td><td>1.5/1.0</td><td>0.8</td><td>3.0</td><td>2.7</td></tr>
      </tbody>
    </table>
    </div>
  </div>
</section>

<svg class="arrow" width="180" height="172" viewBox="1404 728 180 172"><path d="M1407 732L1561 880" stroke="#f00" stroke-width="4"/><path d="M1581 898L1553 885l13-13z" fill="#f00"/></svg>
</div>
</body>
</html>
```
FILE: styles.css
```css
:root{--cy:#9bdada;--gr:#55cdb0;--lt:#c8f4f0;--dk:#4f8080;--gl:#a4eedc;--gd:#2f7a68;--ui:"Noto Sans","Noto Sans CJK SC",sans-serif;--mono:"Liberation Mono",monospace;--serif:"Liberation Serif",serif}
*{box-sizing:border-box}
body{margin:0;background:#000;font:12px/16px var(--ui);color:#000}
ul,pre,h1,h2,h3{margin:0;padding:0;list-style:none}
button,input,select{font:inherit;color:inherit;margin:0;padding:0;border:0;background:none;border-radius:0}
select,input{appearance:none}
a{color:inherit;text-decoration:none}
svg{display:block;flex:none}
.defs{position:absolute}
.desktop{position:relative;height:100vh;overflow:hidden}

.editor{height:100%;display:flex;flex-direction:column}
.titlebar{height:23px;background:#fff;display:flex;align-items:center;gap:6px;padding:0 19px 0 2px;color:#999;font-size:12px;flex:none}
.winctl{margin-left:auto;display:flex;gap:33px}
.menubar{height:57px;flex:none;display:flex;gap:3px;background:#d6eeee;border-top:2px solid #4c7878;border-bottom:1px solid #000;padding-bottom:2px}
.menu{flex:1;display:flex;align-items:center;gap:18px;padding:0 15px 0 14px;background:var(--cy);border:2px solid var(--lt);border-right-color:var(--dk);border-bottom-color:var(--dk);font:bold 14px/18px var(--serif)}
.menu u{text-underline-offset:4px}
.help{margin-left:auto}
.brand{width:412px;display:flex;justify-content:space-between;background:var(--cy);border-left:2px solid var(--dk);padding:0 4px}
.logo{display:flex;align-items:center;color:#00008b;font:italic bold 31px/40px "Liberation Sans",sans-serif}
.product{display:flex;flex-direction:column;align-items:center;font-family:var(--serif);padding-top:1px}
.product b{font-size:24px;line-height:28px}
.product i{font-size:15px;line-height:20px;font-weight:bold}
.date{font:italic bold 15px/16px var(--mono);display:flex;flex-direction:column;align-items:center;padding-top:2px}

.work{flex:1;min-height:0;display:flex}
.layers{width:155px;flex:none;background:var(--gr);padding:2px 2px 0 3px;display:flex;flex-direction:column;font:15px/18px var(--mono)}
.jobbox{background:var(--cy);border:1px solid #000;padding-left:2px;margin-bottom:-1px;height:20px;white-space:nowrap;flex:none}
.matrix{border:1px solid #000;background:var(--gr);margin:3px 0 4px;padding:1px;height:28px;flex:none}
.matrix button{width:100%;height:24px;background:var(--cy);border:2px solid var(--lt);border-right-color:var(--dk);border-bottom-color:var(--dk);text-align:left;padding-left:2px}
.layerarea{flex:1;display:flex;min-height:0;margin-left:-3px;border-left:4px solid #2e6552;justify-content:space-between}
.layerlists{width:123px;border:1px solid #000;border-left:2px solid var(--gl);border-top:4px solid #2e6552;border-right:2px solid var(--gl);padding:0 1px 1px;display:flex;flex-direction:column;gap:3px}
.llist{background:#000;padding:1px}
.llist li{display:flex;height:16px;align-items:stretch;padding:1px 0}
.llist input{width:14px;height:14px;background:#fff;border:2px solid #fff;outline:2px solid #000;outline-offset:-4px;margin-right:3px}
.llist input.on{outline:0;border:4px solid #1010a0}
.llist i{width:14px;margin-right:2px}
.llist i.red{background:#f00}
.llist b{flex:1;background:#fff;font:bold 12px/14px var(--mono);display:flex;justify-content:space-between;padding:0 1px}
.llist b span{display:flex;gap:2px;align-items:center}
.llist .mask{background:#06a57a}.llist .sig{background:#ffc650}.llist .drill{background:#98b4be}

.vscroll{width:14px;display:flex;flex-direction:column;align-items:center;background:#3d9680;border:1px solid var(--gd);border-right-color:var(--gl)}
.vscroll .thumb{flex:1;width:12px;background:var(--gr);border:2px solid var(--gl);border-right-color:var(--gd);border-bottom-color:var(--gd)}
.hscroll{height:14px;display:flex;align-items:center;background:#3d9680;border:1px solid var(--gd);border-bottom-color:var(--gl)}
.hscroll .thumb{flex:1;height:12px;background:var(--gr);border:2px solid var(--gl);border-right-color:var(--gd);border-bottom-color:var(--gd)}
.cy.vscroll,.cy.hscroll{background:#84b6b6;border-color:var(--dk)}
.cy .thumb{background:var(--cy);border-color:var(--lt) var(--dk) var(--dk) var(--lt)}
.hscroll .short{flex:none;width:44px;margin-right:auto}
.board{flex:1;min-width:0;overflow:hidden;background:#000}
.board svg{width:100%;height:100%}
.tools{width:164px;flex:none;border-left:1px solid #2e6552;border-right:2px solid var(--gr)}
.toolgrid{display:grid;grid-template-columns:repeat(4,38px);grid-auto-rows:38px;gap:2px;padding:1px;border:1px solid #2e6552;border-bottom:2px solid var(--cy)}
.toolgrid button{border:3px solid #cdf3f3;border-right-color:#5a9090;border-bottom-color:#5a9090;background:var(--cy);padding:1px}
.toolgrid svg{width:30px;height:30px}
.toolgrid text,.vfoot text{font-family:"Liberation Sans",sans-serif}
.toolgrid.gray{border-bottom-color:#4f8080}
.gray button{background:#d0d0d0;border-color:#eee #888 #888 #eee}
.toolgrid .white{background:#fff}
.toolgrid .gold{background:#ffc650;border-color:#ffe6a0 #a07020 #a07020 #ffe6a0}
.toolgrid .alert,.vfoot .alert{border-color:#d01010}

.window{position:absolute;background:var(--gr);border:1px solid #000;box-shadow:2px 0 6px rgba(0,0,0,.4);font:bold 15px/18px var(--mono)}
.wtitle{height:30px;background:#fff;display:flex;align-items:center;gap:6px;padding:0 9px 0 7px;color:#999;font:12px/18px var(--ui);border-bottom:1px solid #000}
.wtitle button{margin-left:auto}
.well{background:var(--cy);border:2px solid var(--dk);border-right-color:var(--lt);border-bottom-color:var(--lt)}
.well.gr{background:var(--gr);border-color:var(--gd) var(--gl) var(--gl) var(--gd)}
.sel{background:#000;color:var(--cy)}
.gr .sel{color:#7fd8c8}
.mini{width:30px;height:30px;background:var(--cy);border:2px solid var(--lt);border-right-color:var(--dk);border-bottom-color:var(--dk);padding:2px;font:11px/11px var(--serif)}
.mini span{display:flex;flex-direction:column;align-items:center;width:22px;height:22px;border:1px solid #000}
.mini i{width:8px;height:8px;border:1px solid #000;border-radius:50%;background:#e01010}
.mini.ref i{background:#18e018}
.mini.undo{width:34px;font-size:9px}.mini.undo span{width:26px}
.mini.undo svg{width:9px;height:9px}
.minis{display:flex;gap:4px}

.hist{left:1360px;top:148px;width:468px;height:480px}
.histtop{display:flex;gap:2px;padding:3px 3px 2px;height:294px}
.hleft{width:102px;background:var(--cy);border:1px solid #000;border-top-width:2px;border-right-width:2px;display:flex;flex-direction:column}
.radios{height:138px;padding-top:2px;border-bottom:1px solid #000;display:flex;flex-direction:column}
.radios label{height:27px;display:flex;align-items:center;gap:7px;padding-left:7px}
.radios input{width:11px;height:11px;transform:rotate(45deg);background:#8fd0d0;border:2px solid #c8f4f4;border-right-color:var(--dk);border-bottom-color:var(--dk);flex:none}
.radios input:checked{background:#c00040;border-color:#705060 #eee #eee #705060}
.hlist{flex:1;display:flex;gap:4px;padding:1px 1px 2px}
.hlist .well{flex:1;padding:2px}
.hlist .sel,.reslist .sel{line-height:15px;height:15px}
.hleft .minis{padding:0 1px 1px}
.hright{flex:1;min-width:0;border:2px solid var(--dk);border-right-color:var(--lt);border-bottom-color:var(--lt);display:flex;flex-direction:column}
.chart{flex:1;background:var(--cy);border:1px solid #000;display:flex;flex-direction:column}
.chart h3{align-self:center;background:#b4ffff;border:1px solid #000;box-shadow:2px 2px 0 #789;font:italic bold 15px/20px var(--mono);padding:0 2px;height:22px;margin-top:4px;white-space:nowrap}
.bars{margin-top:auto;display:grid;grid-template-columns:repeat(6,55px);align-items:end;padding-left:4px;text-align:center;font:15px/15px var(--mono)}
.bars i{display:block;background:#ff1818;border:1px solid #300;border-bottom:0;margin-right:-1px}
.bars .hot{color:#c82020}
.axis{height:3px;background:#000;margin-bottom:2px}
.bins{display:grid;grid-template-columns:repeat(6,55px);padding-left:4px;margin-bottom:5px;font:15px/14px var(--mono);color:#300}
.bins div{height:30px;background:#ff1818;border:1px solid #300;margin-right:-1px;padding-left:9px}
.hbottom{display:flex;height:65px;border:1px solid #000;border-width:1px 2px 2px 1px;background:var(--cy)}
.reslist{width:92px;padding:3px 2px 0 3px}
.reslist div{white-space:nowrap;line-height:17px}
.reslist .sel{margin-bottom:2px}
.hbottom .vscroll{margin:0 0 0 4px}
.resbox{flex:1;border-left:1px solid #000;padding:1px 4px 2px 6px;display:flex;flex-direction:column}
.resbox label{text-align:center}
.resbox output{line-height:26px;font-weight:normal}
.resbox input{height:14px;background:#84b6b6;border:2px solid var(--dk);border-right-color:var(--lt);border-bottom-color:var(--lt);width:100%}
.resbox input::-webkit-slider-thumb{appearance:none;width:30px;height:10px;background:linear-gradient(90deg,var(--cy) 14px,#4f8080 14px,#4f8080 15px,var(--cy) 15px);border:1px solid var(--lt);border-right-color:var(--dk)}
.splitter{height:9px;display:flex;align-items:center;background:linear-gradient(var(--gr) 4px,var(--gl) 4px,var(--gl) 5px,var(--gd) 5px,var(--gr) 6px);justify-content:flex-end;padding-right:12px}
.splitter i{width:9px;height:9px;background:var(--gr);border:1px solid var(--gl);border-right-color:var(--gd);border-bottom-color:var(--gd)}
.map{margin:0 4px;border:1px solid #000;outline:2px solid var(--gd);height:150px;overflow:hidden}

.viewer{left:9px;top:390px;width:495px}
.viewer h2{height:28px;border:2px solid var(--cy);font:bold 15px/22px var(--serif);text-align:center;box-shadow:inset 1px 1px var(--gl),inset -1px -1px var(--gd)}
.vcols{display:flex;border-top:3px solid #000;border-bottom:2px solid #000}
.vl{width:172px;border-right:3px solid #000;display:flex;flex-direction:column}
.vr{flex:1;display:flex;flex-direction:column}
.vl button,.vrhead button,.navrow button{background:var(--cy);border:2px solid var(--lt);border-right-color:var(--dk);border-bottom-color:var(--dk);height:24px}
.vlhead{height:28px;display:flex;border-bottom:1px solid #000;font-weight:normal}
.vlhead button{margin:1px 2px;height:25px;padding:0 3px}
.vlhead b{flex:1;background:var(--cy);border:1px solid #000;border-width:0 2px;text-align:center;line-height:28px;font-style:italic}
.vlbody{flex:1;display:flex;gap:4px;margin-bottom:5px;padding-right:1px}
.vlbody .well{flex:1;padding:4px 2px 2px 2px;white-space:nowrap}
.vlbody li{height:18px;line-height:16px}
.vlbody li.sel{background-clip:content-box;padding-bottom:2px;margin-right:2px;background-color:#000}
.vlbody .cats{padding:5px 2px 10px}
.trough{height:34px}
.vl>.hscroll{margin:0 20px 0 1px}.vr>.hscroll{margin:0 20px 2px 0}
.optbox{border:1px solid #000;margin-top:2px;padding:2px 2px 2px 6px}
.opt{position:relative;background:var(--cy);border:2px solid var(--lt);border-right-color:var(--dk);border-bottom-color:var(--dk);height:27px;display:flex}
.opt::after{content:"";position:absolute;right:5px;top:9px;width:12px;height:6px;background:var(--cy);border:2px solid var(--lt);border-right-color:var(--dk);border-bottom-color:var(--dk);pointer-events:none}
.opt select{width:100%;padding-left:4px}
.vrhead{display:flex;background:var(--cy);height:29px;padding:1px;align-items:center}
.vrhead button{width:205px;height:28px;font-style:italic}
.vrhead label{margin:0 7px 0 1px}
.vrhead .opt{flex:1}
.navrow{display:flex;gap:4px;padding:1px;align-items:center}
.navrow button{padding:0 2px;font-weight:bold}
.navrow input{flex:1;width:20px;height:24px;border:2px solid var(--gd);border-right-color:var(--gl);border-bottom-color:var(--gl);padding-left:5px}
.zoomrow{display:flex;align-items:center}
.zbox{width:123px;border:1px solid #000;padding:2px 2px 2px 5px}
.svbox{display:flex;border:1px solid #000;background:var(--cy);align-items:center;margin-right:5px}
.green{background:#18e818;padding:2px 1px 2px 5px;width:68px}
.green .opt{background:#18e818;border-color:#70ff70 #108810 #108810 #70ff70}
.chk{display:flex;gap:4px;align-items:center;padding-bottom:6px}
.chk input{width:13px;height:13px;border:1px solid var(--gl);border-right-color:var(--gd);border-bottom-color:var(--gd)}
.vr .minis{justify-content:flex-end;padding:2px 1px 2px;font-weight:normal}
.status{height:21px;text-align:center;font:bold 15px/20px var(--mono);padding-right:2px}
.erf{height:23px;background:#ffffce;border:2px solid #000;border-width:2px 0 1px;font:bold 15px/20px var(--mono);padding-left:1px}
.vfoot{display:flex;gap:4px;background:var(--cy);padding:1px}
.vfoot button{width:30px;height:30px;border:3px solid var(--lt);border-right-color:var(--dk);border-bottom-color:var(--dk);padding:1px}
.vfoot .closebtn{flex:1}

.excel{position:absolute;left:503px;top:618px;right:0;bottom:0;background:#fff;overflow:hidden;border-left:1px solid #8fb4e0}
.excel svg text{font-family:"Liberation Serif",serif}
.xtitle{height:30px;display:flex;align-items:center;position:relative}
.orb{position:absolute;z-index:1;left:3px;top:8px;width:37px;height:37px;border-radius:50%;border:1px solid #8a9bb8;background:radial-gradient(circle at 50% 30%,#fff,#dfe6f0 60%,#b8c4d8);display:flex;align-items:center;justify-content:center}
.qat{margin-left:38px;height:22px;width:104px;border:1px solid #b8c4d8;border-left:0;border-radius:0 11px 11px 0;display:flex;align-items:center;gap:7px;padding-left:13px}
.more{margin-left:8px}
.xtitle h1{position:absolute;left:96px;right:0;top:7px;text-align:center;font:13px/18px var(--ui);pointer-events:none}
.min{margin-left:auto;margin-right:14px}
.tabs{height:27px;background:#bfdbff;display:flex;padding:2px 0 0 48px;color:#15428b;gap:3px;border-bottom:1px solid #8db2e3}
.tabs a{padding:4px 12px 0;height:24px;border:1px solid transparent;white-space:nowrap}
.tabs .act{background:#e3edfa;border:1px solid #8db2e3;border-bottom:0;border-radius:3px 3px 0 0;height:25px;padding:4px 11px;margin-right:2px}
.ribbon{display:flex;gap:4px;padding:3px 3px 2px;background:#d3e2f4;height:109px;border-bottom:3px solid #a8c2e4;color:#15428b}
.grp{flex:none;border:1px solid #9ebfe4;border-radius:3px;background:linear-gradient(#dde8f5,#cfdff1 16%,#c9daee 17%,#dceaf8);display:flex;flex-direction:column;white-space:nowrap}
.gb{flex:1;display:flex;padding:5px 3px 0}
.gl{height:20px;background:#c1d8f0;text-align:center;color:#3e6aaa;line-height:20px;position:relative}
.gl svg{position:absolute;right:4px;top:4px}
.g1{width:112px}.g2{width:233px}.g3{width:228px}.g4{width:134px}.g5{width:567px}.g6{width:133px}.g7{width:180px}
.g1 .gl{padding-right:10px}
.big{display:flex;flex-direction:column;align-items:center;width:50px;line-height:17px;gap:1px}
.big>svg:first-child{margin-bottom:4px}
.big>svg:last-child{margin-top:6px}
.big span{display:flex;align-items:center;gap:4px}
.big.w{width:57px}.big.n{width:42px}
.stack{display:flex;flex-direction:column;gap:6px}
.g1 .stack{margin-left:-2px}
.stack button{display:flex;align-items:center;gap:3px;height:16px}
.sigma{width:14px;font:bold 16px/16px var(--serif);color:#000}
.rows{flex-direction:column;gap:12px;padding-top:8px}
.rows>div{display:flex;gap:4px;height:24px;align-items:center}
.bg{display:flex;align-items:center;height:20px;border:1px solid #9ab8de;border-radius:2px;padding:0 3px 0 1px;gap:2px}
.bg button{min-width:17px;height:18px;display:flex;align-items:center;justify-content:center;color:#222}
.push{margin-left:auto}
.rows select{height:24px;border:1px solid #abc4e6;color:#000;padding-left:2px;background:url("data:image/svg+xml,%3Csvg xmlns='http://www.w3.org/2000/svg' width='5' height='4'%3E%3Cpath d='M0 0h5L2.500 3z' fill='%234b6a98'/%3E%3C/svg%3E") no-repeat right 4px center #eaf2fb}
.font{width:130px;margin-right:-4px}.size{width:46px}.numf{width:128px}
.bg .l{width:22px;font:15px/18px var(--serif);color:#111}
.bg .aa{font:bold 17px/18px var(--serif);width:19px}.bg .aa.s{font-size:13px}.aa sup{font-size:8px;color:#27c;line-height:8px;align-self:flex-start}
.bg .ac{font:bold 14px/14px var(--serif);color:#44608c;border-bottom:4px solid #f00;height:18px;min-width:16px}
.bg .wen{flex-direction:column;font:10px/10px var(--ui);color:#2548a8;height:20px}.wen small{font:8px/9px var(--ui);color:#222}
.bg.al{padding:0}.bg.al button{width:22px}
.bg .hot{background:#ffc06a}
.bg .dec{font:bold 8px/8px var(--ui);width:19px}
.txt{display:flex;align-items:center;gap:3px;color:#15428b;margin-left:auto;width:94px}
.gallery{display:flex;border:1px solid #b5cdec;background:#d7e5f5;height:58px;margin-left:4px}
.cells{display:grid;grid-template-columns:repeat(4,100px);grid-template-rows:22px 22px;gap:6px;padding:3px}
.cells span{font-size:14px;line-height:20px;padding-left:5px;background:#fff;color:#000;border:1px solid transparent}
.cells .norm{outline:2px solid #f0b040;font-size:13px}.cells .bad{background:#cc99ff;color:#800080}.cells .good{background:#a0e0e0;color:#008000}.cells .neu{background:#ff9;color:#806000}
.cells .lnk{color:#00c;text-decoration:underline}.cells .calc{border-color:#888;color:#e00000;font-weight:bold}.cells .chkc{background:#969696;color:#fff;border:1px solid #333;outline:1px solid #333;outline-offset:-3px;font-weight:bold}.cells .expl{color:#808080;font-style:italic}
.gs{display:flex;flex-direction:column;width:14px;border-left:1px solid #b5cdec;margin-left:6px}
.gs button{flex:1;display:flex;align-items:center;justify-content:center;border-bottom:1px solid #b5cdec}
.sort{margin-left:14px;align-items:flex-start}.big .az{flex-direction:column;gap:0;font:bold 17px/15px var(--serif);color:#2c5cb0;height:35px;padding-top:2px}.az b+b{color:#b03030}

.fbar{height:22px;display:flex;align-items:center;background:#fff;border-bottom:2px solid #8fb0d8;border-top:1px solid #8fb0d8}
.name{width:149px;text-align:center;padding-right:10px;font:13px/18px var(--ui)}
.fxbox{margin-left:3px;width:77px;height:19px;background:linear-gradient(#dce8f8,#b8cdee);border-radius:10px 0 0 10px;display:flex;justify-content:space-between;align-items:center;padding:0 6px 0 3px;font:italic bold 15px/18px var(--serif);color:#444}
.fxbox small{font-size:11px}
.knob{width:10px;height:10px;border-radius:50%;background:#c4cedc;border:1px solid #eef}
.formula{flex:1;border-left:1px solid #8fb0d8;height:19px}
.cols{display:grid;grid-template-columns:25px 21px 77px 74px repeat(8,87px) 329px repeat(6,64px);height:19px;margin-top:2px;background:linear-gradient(#f6f9fd,#d8e1ee);border-bottom:1px solid #8fa8cc;border-top:1px solid #7a9cc8}
.cols span{text-align:center;font:14px/17px "Liberation Sans",sans-serif;color:#333;border-right:1px solid #9eb6ce}
.cols .corner{background:#a9c4e9}.cols .cur{background:linear-gradient(#fbd79a,#f0b858)}
.sheet{display:flex;height:270px;font:13px/16px "Liberation Serif","Noto Sans CJK SC",serif}
.rowhead{width:25px;background:#e4ecf7;flex:none}
.ca{width:22px;border-right:1px solid #000;flex:none}
.cb,.cc{width:77px;flex:none;border-right:2px solid #000;font-weight:bold;text-align:center;padding-top:124px;font-size:14px}
.cc{width:74px;padding:157px 7px 0}
.inner{padding:1px 6px 0 1px;border-right:2px solid #000}
.inner table{border-collapse:collapse;table-layout:fixed;width:1016px}
.w81{width:81px}.w75{width:75px}.w72{width:72px}.w301{width:301px}.w115{width:115px}.w93{width:93px}.w62{width:62px}.w63{width:63px}.w82{width:82px}
.inner th,.inner td{border:1px solid #222;text-align:left;padding:0 6px;white-space:nowrap;font-size:12px;line-height:18px;font-weight:normal}
.inner th{font-weight:bold;font-size:13px;height:35px}
.inner u{text-decoration:underline wavy #3a9a3a 1px;text-underline-offset:2px;text-decoration-skip-ink:none}
.inner sub{font-size:8px;font-style:italic;color:#666;line-height:8px}
.inner em{font-style:normal;color:#f00}
.r1 td{height:57px}.r2 td{height:50px}.r3 td{height:110px}
.inner .long{padding-bottom:18px}
.arrow{position:absolute;left:1404px;top:728px}
```
